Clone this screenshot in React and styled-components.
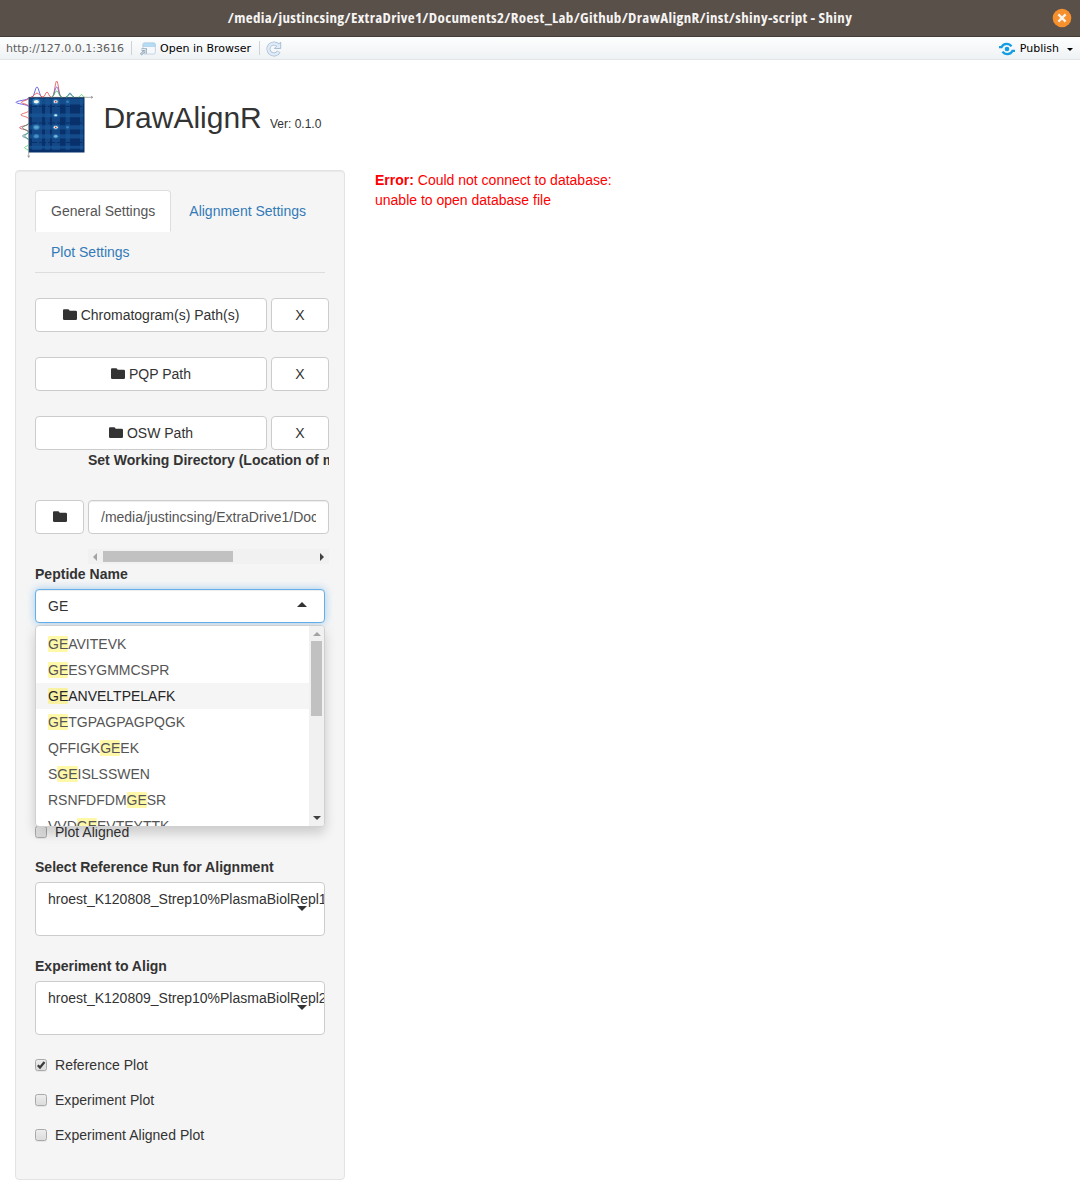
import React from "react";
import styled, { createGlobalStyle, css } from "styled-components";

const Global = createGlobalStyle`
  *, *::before, *::after { box-sizing: border-box; }
  body {
    margin: 0;
    background: #fff;
    color: #333;
    font: 14px/20px "Liberation Sans", Arial, sans-serif;
  }
`;

const Window = styled.div`
  height: 1194px;
  overflow: hidden;
  background: #fff;
`;

const TitleBar = styled.header`
  display: flex;
  align-items: center;
  height: 37px;
  padding: 0 8px;
  background: #59504a;
  border-bottom: 1px solid #443c37;
`;

const TitleText = styled.div`
  flex: 1;
  padding: 0 0 2px 20px;
  text-align: center;
  white-space: nowrap;
  color: #f6f4f2;
  font: 700 15px/20px "Open Sans", "Noto Sans", sans-serif;
  font-stretch: 75%;
  letter-spacing: 0.34px;
`;

const Toolbar = styled.div`
  display: flex;
  align-items: center;
  height: 23px;
  padding: 1px 7px 0 6px;
  background: linear-gradient(#fdfefe, #eff2f4);
  border-bottom: 1px solid #e2e5e8;
  color: #000;
  font: 11px/20px "DejaVu Sans", sans-serif;
  white-space: nowrap;
`;

const Address = styled.span`
  width: 125px;
  color: #5d5d5d;
`;

const Divider = styled.span`
  width: 1px;
  height: 14px;
  margin: -1px ${(p) => p.$after}px 0 0;
  background: #ccd2d5;
`;

const OpenLink = styled.span`
  display: flex;
  align-items: center;
  gap: 4px;
  width: 119px;
`;

const PublishLink = styled.span`
  display: flex;
  align-items: center;
  gap: 5px;
  margin-left: auto;
`;

const Caret = styled.i`
  width: 0;
  height: 0;
  border: ${(p) => p.$size}px solid transparent;
  ${(p) =>
    p.$up
      ? css`border-top-width: 0; border-bottom-color: ${p.$color || "#333"};`
      : css`border-bottom-width: 0; border-top-color: ${p.$color || "#333"};`}
`;

const MenuCaret = styled(Caret)`
  margin: 2px 0 0 3px;
`;

const Page = styled.div`
  padding: 20px 15px 0;
`;

const Brand = styled.div`
  display: flex;
  align-items: center;
  height: 90px;
  padding-bottom: 12px;
`;

const BrandName = styled.h2`
  margin: -3px 0 0 10.4px;
  font-size: 30px;
  font-weight: 400;
  line-height: 33px;
`;

const Version = styled.span`
  margin: 9px 0 0 8.2px;
  font-size: 12px;
`;

const Columns = styled.div`
  display: grid;
  grid-template-columns: 330px 1fr;
  gap: 30px;
  align-items: start;
`;

const Well = styled.aside`
  height: 1010px;
  padding: 19px;
  background: #f5f5f5;
  border: 1px solid #e3e3e3;
  border-radius: 4px;
  box-shadow: inset 0 1px 1px rgba(0, 0, 0, 0.05);
`;

const Tabs = styled.nav`
  display: flex;
  flex-wrap: wrap;
  margin-bottom: 25px;
  border-bottom: 1px solid #ddd;
`;

const Tab = styled.a`
  margin: 0 2px -1px 0;
  padding: 10px 15px;
  border: 1px solid transparent;
  border-radius: 4px 4px 0 0;
  color: #337ab7;
  ${(p) =>
    p.$active &&
    css`
      color: #555;
      background: #fff;
      border-color: #ddd;
      border-bottom-color: #fff;
    `}
  &:last-child { margin-bottom: 0; padding-bottom: 9px; }
`;

const ButtonRow = styled.div`
  display: grid;
  grid-template-columns: 232px 58px;
  gap: 4px;
  width: 294px;
  margin-bottom: ${(p) => (p.$tight ? 0 : 25)}px;
`;

const Button = styled.button`
  display: flex;
  align-items: center;
  justify-content: center;
  gap: 4px;
  height: 34px;
  padding: 0;
  color: #333;
  background: #fff;
  border: 1px solid #ccc;
  border-radius: 4px;
  font: inherit;
  & > svg { margin-bottom: 1px; }
`;

const Directory = styled.div`
  display: grid;
  grid-template-columns: 49px 241px;
  column-gap: 4px;
  width: 294px;
`;

const DirectoryLabel = styled.div`
  grid-column: 2;
  height: 50px;
  overflow: hidden;
  font-weight: 700;
  white-space: nowrap;
`;

const PathField = styled.div`
  height: 34px;
  padding: 6px 12px;
  border: 1px solid #ccc;
  border-radius: 4px;
  background: #fff;
  box-shadow: inset 0 1px 1px rgba(0, 0, 0, 0.075);
`;

const PathText = styled.div`
  overflow: hidden;
  color: #555;
  white-space: nowrap;
`;

const HScroll = styled.div`
  grid-column: 2;
  display: flex;
  align-items: center;
  height: 15px;
  margin-top: 15px;
  background: #f1f1f1;
`;

const HThumb = styled.span`
  width: 130px;
  height: 11px;
  margin: 0 auto 0 6px;
  background: #c1c1c1;
`;

const SideArrow = styled.i`
  width: 0;
  height: 0;
  border: 4px solid transparent;
  ${(p) =>
    p.$left
      ? css`margin-left: 5px; border-left-width: 0; border-right: 4px solid #a3a3a3;`
      : css`margin-right: 5px; border-right-width: 0; border-left: 4px solid #404040;`}
`;

const FieldLabel = styled.div`
  margin-bottom: 5px;
  font-weight: 700;
  letter-spacing: 0.01px;
`;

const Combo = styled.div`
  position: relative;
  height: 34px;
  margin-bottom: 199px;
`;

const ComboInput = styled.div`
  display: flex;
  align-items: center;
  justify-content: space-between;
  height: 34px;
  padding: 0 17px 0 12px;
  background: #fff;
  border: 1px solid #66afe9;
  border-radius: 4px;
  box-shadow: inset 0 1px 1px rgba(0, 0, 0, 0.075), 0 0 8px rgba(102, 175, 233, 0.6);
  & > i { margin-bottom: 3px; }
`;

const Dropdown = styled.div`
  position: absolute;
  top: 36px;
  left: 0;
  display: flex;
  width: 290px;
  height: 202px;
  overflow: hidden;
  background: #fff;
  border: 1px solid #d0d0d0;
  border-radius: 4px;
  box-shadow: 0 6px 12px rgba(0, 0, 0, 0.175);
`;

const Options = styled.div`
  flex: 1;
  padding: 5px 0;
`;

const Option = styled.div`
  height: 26px;
  padding: 3px 12px;
  white-space: nowrap;
  color: ${(p) => (p.$active ? "#262626" : "#555")};
  background: ${(p) => (p.$active ? "#f5f5f5" : "transparent")};
`;

const Match = styled.span`
  border-radius: 1px;
  background: rgba(255, 237, 40, 0.4);
`;

const VScroll = styled.div`
  display: flex;
  flex-direction: column;
  align-items: center;
  width: 15px;
  padding: 6px 0;
  background: #f1f1f1;
`;

const VThumb = styled.span`
  width: 11px;
  height: 75px;
  margin: 5px 0 auto;
  background: #c1c1c1;
`;

const RunSelect = styled.div`
  position: relative;
  height: 54px;
  margin-bottom: 20px;
  padding: 6px 0 0 12px;
  overflow: hidden;
  white-space: nowrap;
  background: #fff;
  border: 1px solid #ccc;
  border-radius: 4px;
`;

const RunCaret = styled(Caret)`
  position: absolute;
  top: 23px;
  right: 17px;
`;

const CheckRow = styled.label`
  display: flex;
  align-items: center;
  gap: 8px;
  margin-bottom: 15px;
  letter-spacing: 0.02px;
`;

const Box = styled.span`
  display: grid;
  place-items: center;
  width: 12px;
  height: 12px;
  border: 1px solid #a9a9a9;
  border-radius: 2.5px;
  background: linear-gradient(#ededed, #dcdcdc);
  box-shadow: 0 1px 0 rgba(0, 0, 0, 0.06);
`;

const ErrorText = styled.div`
  width: 260px;
  color: #f00;
`;

const FolderIcon = () => (
  <svg width="14" height="11" viewBox="0 0 14 11">
    <path fill="#333" d="M0 9.8V1.4Q0 .3 1 .3H5Q6 .3 6.3 1.1L6.6 1.8H12.7Q14 1.8 14 3V9.8Q14 11 12.8 11H1.2Q0 11 0 9.8Z" />
  </svg>
);

const CloseIcon = () => (
  <svg width="20" height="20" viewBox="0 0 20 20">
    <circle cx="10" cy="10" r="9.3" fill="#f5902d" />
    <path d="M6.4 6.4L13.6 13.6M13.6 6.4L6.4 13.6" stroke="#fbf3ea" strokeWidth="2.3" />
  </svg>
);

const BrowserIcon = () => (
  <svg width="16" height="14" viewBox="0 0 16 14">
    <rect x="3" y="1" width="12.3" height="11" rx="1.5" fill="#f6f9fc" stroke="#bcd0e0" strokeWidth=".9" />
    <path d="M3 4.5V2.5Q3 1 4.5 1H13.8Q15.3 1 15.3 2.500V4.500Z" fill="#b5dcf5" stroke="#a6cbe3" strokeWidth=".6" />
    <path d="M.8 12.7L4.3 9.2M1.5 7.5H5.8V11.8" fill="none" stroke="#93a7b6" strokeWidth="2.4" />
    <path d="M.8 12.7L4.3 9.2M1.5 7.5H5.8V11.8" fill="none" stroke="#e4edf3" strokeWidth="1" />
  </svg>
);

const ReloadIcon = () => (
  <svg width="16" height="16" viewBox="0 0 16 16">
    <path d="M12 4.2A5.5 5.5 0 1 0 12.8 10.5" fill="none" stroke="#a9bfd3" strokeWidth="4" />
    <path d="M14.7 1V7.5H8.3Z" fill="#dfebf8" stroke="#a9bfd3" />
    <path d="M12.2 4.5A5.5 5.5 0 1 0 12.6 10.8" fill="none" stroke="#dfebf8" strokeWidth="2.4" />
  </svg>
);

const PublishIcon = () => (
  <svg width="16" height="14" viewBox="0 0 16 14">
    <g fill="none" stroke="#159de3" strokeWidth="2.2">
      <path d="M0 5.2H2.5Q4 1.8 7.5 1.8Q10.8 1.8 12.5 4.3" />
      <path d="M16 8.8H13.5Q12 12.2 8.5 12.2Q5.2 12.2 3.5 9.7" />
    </g>
    <circle cx="8" cy="7" r="2.3" fill="#159de3" />
  </svg>
);

const bell = (c, h, w, base) =>
  `M${c - w * 2} ${base}C${c - w} ${base} ${c - w * 0.7} ${base - h} ${c} ${base - h}S${c + w} ${base} ${c + w * 2} ${base}`;

const TOP_PEAKS = [
  [22, 10, 2.6, "#4444dd"], [22, 4, 3, "#e34848"], [32, 5, 2, "#e34848"],
  [41.7, 16, 2.3, "#d94a4a"], [41.7, 10, 2.5, "#6950d0"], [41.7, 6, 2.6, "#2fbd52"],
  [55, 4, 2, "#4763bd"], [55, 3, 2, "#38b574"], [66.5, 2.5, 1.5, "#54cf64"],
];
const SIDE_PEAKS = [
  [17.8, 12.5, 2.2, "#5149dc"], [17.8, 7, 2, "#e24848"], [30.3, 7.5, 2, "#e34848"],
  [43.2, 9, 2, "#ca4758"], [43.2, 6, 2.4, "#37865f"], [51.5, 6, 2, "#416a9f"],
  [51.5, 4, 2, "#38a56c"], [63.2, 4, 1.6, "#54cf64"],
];
const COLUMNS = [[17, 10], [30, 5], [37, 8], [50.5, 4.5], [65, 3]];
const ROWS = [[18.5, 6], [33.5, 3.8], [45.3, 4.2], [54.3, 4.3], [65.8, 3]];
const SPOTS = [
  [21.3, 21.7, 2.6, "#f2f7ee"], [40.7, 21.7, 1.9, "#fff"], [40.7, 35.3, 1.5, "#cfeaf5"],
  [40.7, 47.3, 1.9, "#fff"], [21.3, 47.3, 2.2, "#5aa5d0"], [21.3, 56.3, 1.8, "#4592c4"],
  [40.7, 56.3, 1.7, "#70b5d9"], [52.5, 21.7, 1, "#3983bd"], [52.5, 47.3, 1, "#3983bd"],
];

const Logo = () => (
  <svg width="78" height="78" viewBox="0 0 78 78">
    <rect x="13.7" y="17" width="55.8" height="55.5" fill="#08306b" />
    <g fill="#1a5798">
      {COLUMNS.map(([x, w]) => <rect key={x} x={x} y="18.5" width={w} height="51.5" rx="1" opacity=".6" />)}
      {ROWS.map(([y, h]) => <rect key={y} x="14.5" y={y} width="54" height={h} rx="1" opacity=".7" />)}
    </g>
    <path d="M15 26.5H69M15 43H69M15 62.5H69" stroke="#08306b" strokeWidth="1.2" strokeDasharray="7 2" />
    {SPOTS.map(([x, y, r, c]) => (
      <g key={`${x}-${y}`}>
        <ellipse cx={x} cy={y} rx={r * 1.5} ry={r * 1.25} fill="#3f90c5" opacity=".7" />
        <ellipse cx={x} cy={y} rx={r} ry={r * 0.7} fill={c} />
      </g>
    ))}
    <circle cx="40.7" cy="21.7" r=".9" fill="#c7361e" />
    <circle cx="40.7" cy="47.3" r=".9" fill="#c7361e" />
    <g fill="none" strokeWidth=".8">
      <path d="M13.7 17.3H77M76 16.3L78 17.3L76 18.3M13.7 17V77M12.7 75.5L13.7 77.5L14.7 75.5" stroke="#777" strokeWidth=".6" />
      {TOP_PEAKS.map(([c, h, w, col], i) => <path key={i} d={bell(c, h, w, 17)} stroke={col} />)}
      <g transform="translate(-3.5 4.5) matrix(0 1 1 0 0 0)">
        {SIDE_PEAKS.map(([c, h, w, col], i) => <path key={i} d={bell(c, h, w, 17)} stroke={col} />)}
      </g>
    </g>
  </svg>
);

const PATHS = ["Chromatogram(s) Path(s)", "PQP Path", "OSW Path"];
const PEPTIDES = ["GEAVITEVK", "GEESYGMMCSPR", "GEANVELTPELAFK", "GETGPAGPAGPQGK", "QFFIGKGEEK", "SGEISLSSWEN", "RSNFDFDMGESR", "VVDGEEVTEYTTK"];
const QUERY = "GE";

const Highlighted = ({ text }) => {
  const at = text.indexOf(QUERY);
  return (
    <>
      {text.slice(0, at)}
      <Match>{QUERY}</Match>
      {text.slice(at + QUERY.length)}
    </>
  );
};

const Check = ({ label, checked }) => (
  <CheckRow>
    <Box>
      {checked && (
        <svg width="10" height="10" viewBox="0 0 10 10">
          <path d="M1.8 5.2L4 7.5L8.5 2" fill="none" stroke="#3c3c3c" strokeWidth="2.3" />
        </svg>
      )}
    </Box>
    {label}
  </CheckRow>
);

export default function App() {
  return (
    <Window>
      <Global />
      <TitleBar>
        <TitleText>/media/justincsing/ExtraDrive1/Documents2/Roest_Lab/Github/DrawAlignR/inst/shiny-script - Shiny</TitleText>
        <CloseIcon />
      </TitleBar>
      <Toolbar>
        <Address>http://127.0.0.1:3616</Address>
        <Divider $after={8} />
        <OpenLink><BrowserIcon />Open in Browser</OpenLink>
        <Divider $after={6} />
        <ReloadIcon />
        <PublishLink><PublishIcon />Publish<MenuCaret $size={3} $color="#000" /></PublishLink>
      </Toolbar>
      <Page>
        <Brand>
          <Logo />
          <BrandName>DrawAlignR</BrandName>
          <Version>Ver: 0.1.0</Version>
        </Brand>
        <Columns>
          <Well>
            <Tabs>
              <Tab $active>General Settings</Tab>
              <Tab>Alignment Settings</Tab>
              <Tab>Plot Settings</Tab>
            </Tabs>
            {PATHS.map((name, i) => (
              <ButtonRow key={name} $tight={i === PATHS.length - 1}>
                <Button><FolderIcon />{name}</Button>
                <Button>X</Button>
              </ButtonRow>
            ))}
            <Directory>
              <DirectoryLabel>Set Working Directory (Location of mzML files)</DirectoryLabel>
              <Button><FolderIcon /></Button>
              <PathField><PathText>/media/justincsing/ExtraDrive1/Documents2</PathText></PathField>
              <HScroll><SideArrow $left /><HThumb /><SideArrow /></HScroll>
            </Directory>
            <FieldLabel>Peptide Name</FieldLabel>
            <Combo>
              <ComboInput>GE<Caret $size={5} $up /></ComboInput>
              <Dropdown>
                <Options>
                  {PEPTIDES.map((p) => (
                    <Option key={p} $active={p === "GEANVELTPELAFK"}><Highlighted text={p} /></Option>
                  ))}
                </Options>
                <VScroll>
                  <Caret $size={4} $up $color="#a3a3a3" />
                  <VThumb />
                  <Caret $size={4} $color="#404040" />
                </VScroll>
              </Dropdown>
            </Combo>
            <Check label="Plot Aligned" />
            <FieldLabel>Select Reference Run for Alignment</FieldLabel>
            <RunSelect>hroest_K120808_Strep10%PlasmaBiolRepl1_R01<RunCaret $size={5} /></RunSelect>
            <FieldLabel>Experiment to Align</FieldLabel>
            <RunSelect>hroest_K120809_Strep10%PlasmaBiolRepl2_R01<RunCaret $size={5} /></RunSelect>
            <Check label="Reference Plot" checked />
            <Check label="Experiment Plot" />
            <Check label="Experiment Aligned Plot" />
          </Well>
          <ErrorText><b>Error:</b> Could not connect to database: unable to open database file</ErrorText>
        </Columns>
      </Page>
    </Window>
  );
}
